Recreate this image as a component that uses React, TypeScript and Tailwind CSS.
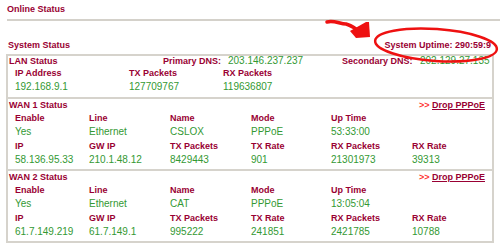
import React from 'react';

const label = 'font-bold text-[9px] text-[#990033] whitespace-nowrap';
const value = 'text-[10px] text-[#339933] whitespace-nowrap';

type Cell = { k: string; v: string };

function WanSection({ title, rows }: { title: string; rows: Cell[][] }) {
  return (
    <div className="border-t-2 border-[#d6d3cc] pb-[2px]">
      <div className="flex h-[12px] items-center justify-between pl-[1px] pr-[7px] leading-[12px]">
        <span className={label}>{title}</span>
        <span className="text-[9px] font-bold whitespace-nowrap">
          <span className="text-[#ff3333]">&gt;&gt; </span>
          <a className="text-[#990033] underline">Drop PPPoE</a>
        </span>
      </div>
      {rows.map((row, i) => (
        <React.Fragment key={i}>
          <div className="grid h-[14px] grid-cols-[74px_81px_81px_80px_81px_1fr] items-center pl-[7px] leading-[14px]">
            {row.map((c) => (
              <span key={c.k} className={label}>{c.k}</span>
            ))}
          </div>
          <div className="grid h-[14px] grid-cols-[74px_81px_81px_80px_81px_1fr] items-center pl-[7px] leading-[14px]">
            {row.map((c) => (
              <span key={c.k} className={value}>{c.v}</span>
            ))}
          </div>
        </React.Fragment>
      ))}
    </div>
  );
}

export default function App() {
  const wan1: Cell[][] = [
    [
      { k: 'Enable', v: 'Yes' },
      { k: 'Line', v: 'Ethernet' },
      { k: 'Name', v: 'CSLOX' },
      { k: 'Mode', v: 'PPPoE' },
      { k: 'Up Time', v: '53:33:00' },
    ],
    [
      { k: 'IP', v: '58.136.95.33' },
      { k: 'GW IP', v: '210.1.48.12' },
      { k: 'TX Packets', v: '8429443' },
      { k: 'TX Rate', v: '901' },
      { k: 'RX Packets', v: '21301973' },
      { k: 'RX Rate', v: '39313' },
    ],
  ];
  const wan2: Cell[][] = [
    [
      { k: 'Enable', v: 'Yes' },
      { k: 'Line', v: 'Ethernet' },
      { k: 'Name', v: 'CAT' },
      { k: 'Mode', v: 'PPPoE' },
      { k: 'Up Time', v: '13:05:04' },
    ],
    [
      { k: 'IP', v: '61.7.149.219' },
      { k: 'GW IP', v: '61.7.149.1' },
      { k: 'TX Packets', v: '995222' },
      { k: 'TX Rate', v: '241851' },
      { k: 'RX Packets', v: '2421785' },
      { k: 'RX Rate', v: '10788' },
    ],
  ];

  return (
    <div className="relative h-[250px] w-[500px] overflow-hidden bg-white font-['Liberation_Sans',Arial,sans-serif]">
      <div className="flex h-[19px] items-center pl-[7px]">
        <span className={label}>Online Status</span>
      </div>
      <div className="ml-[7px] h-[2px] bg-[#d4d1ca]" />
      <div className="flex h-[33px] items-end justify-between pb-[2px] pl-[8px] pr-[9px] leading-[14px]">
        <span className={label}>System Status</span>
        <span className={label}>System Uptime: 290:59:9</span>
      </div>

      <div className="mx-[6px] border-2 border-[#d6d3cc]">
        {/* LAN */}
        <div className="pb-[3px]">
          <div className="flex h-[10px] items-center pl-[1px] leading-[10px]">
            <span className={`${label} w-[154px]`}>LAN Status</span>
            <span className={`${label} w-[65px]`}>Primary DNS:</span>
            <span className={`${value} w-[114px]`}>203.146.237.237</span>
            <span className={`${label} w-[78px]`}>Secondary DNS:</span>
            <span className={value}>202.129.27.135</span>
          </div>
          <div className="grid h-[14px] grid-cols-[114px_94px_1fr] items-center pl-[7px] leading-[14px]">
            <span className={label}>IP Address</span>
            <span className={label}>TX Packets</span>
            <span className={label}>RX Packets</span>
          </div>
          <div className="grid h-[14px] grid-cols-[114px_94px_1fr] items-center pl-[7px] leading-[14px]">
            <span className={value}>192.168.9.1</span>
            <span className={value}>127709767</span>
            <span className={value}>119636807</span>
          </div>
        </div>
        <WanSection title="WAN 1 Status" rows={wan1} />
        <WanSection title="WAN 2 Status" rows={wan2} />
      </div>

      {/* hand-drawn red marking */}
      <svg className="pointer-events-none absolute left-0 top-0" width="500" height="250" viewBox="0 0 500 250">
        <ellipse cx="436" cy="45" rx="61" ry="16" transform="rotate(4 436 45)" fill="none" stroke="#ee1111" strokeWidth="2.5" />
        <path d="M327 22 C334 20 340 24 346 24 C350 25 353 27 356 29" fill="none" stroke="#ee1111" strokeWidth="3.5" strokeLinecap="round" />
        <polygon points="350,31 366,22 369,22 370,37 356,38" fill="#ee1111" />
      </svg>
    </div>
  );
}
